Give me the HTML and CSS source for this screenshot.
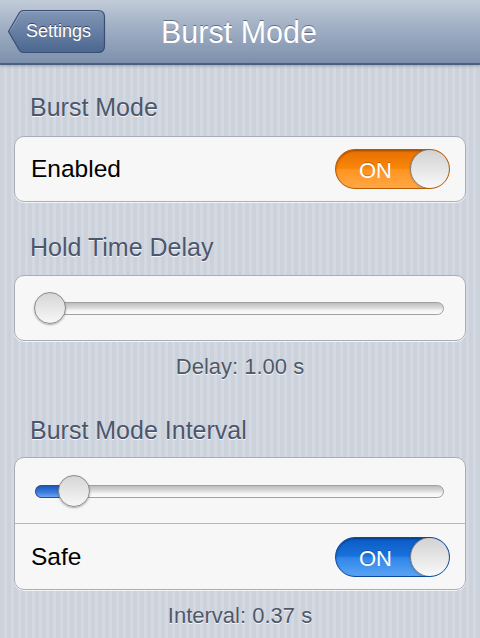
FILE: index.html
```html
<!DOCTYPE html>
<html>
<head>
<meta charset="utf-8">
<link rel="stylesheet" href="styles.css">
</head>
<body>
<div class="navbar">
  <div class="back">
    <svg class="back-shape" width="99" height="45" viewBox="0 0 99 45">
      <defs>
        <linearGradient id="bg" x1="0" y1="0" x2="0" y2="1">
          <stop offset="0" stop-color="#8297b6"/>
          <stop offset="1" stop-color="#4b6690"/>
        </linearGradient>
      </defs>
      <path d="M1.5 22.5 L12.5 3.5 Q14 1.5 16.5 1.5 L91 1.5 Q97.5 1.5 97.5 8 L97.5 37 Q97.5 43.5 91 43.5 L16.5 43.5 Q14 43.5 12.5 41.5 Z" fill="url(#bg)" stroke="#3a4e70" stroke-width="1.2"/>
      <path d="M3 22 L13.5 4 Q15 2.6 17 2.6 L91 2.6" fill="none" stroke="rgba(255,255,255,0.18)" stroke-width="1"/>
    </svg>
    <span class="back-text">Settings</span>
  </div>
  <div class="title">Burst Mode</div>
</div>
<div class="content">
  <div class="group-header first">Burst Mode</div>
  <div class="card">
    <div class="row">
      <span class="label">Enabled</span>
      <div class="switch orange"><span class="on">ON</span><span class="knob"></span></div>
    </div>
  </div>

  <div class="group-header">Hold Time Delay</div>
  <div class="card">
    <div class="row slider-row">
      <div class="slider">
        <div class="track"></div>
        <div class="thumb" style="left:0px"></div>
      </div>
    </div>
  </div>
  <div class="footer">Delay: 1.00 s</div>

  <div class="group-header after-footer">Burst Mode Interval</div>
  <div class="card tall">
    <div class="row slider-row">
      <div class="slider">
        <div class="track"></div>
        <div class="fill" style="width:32px"></div>
        <div class="thumb" style="left:24px"></div>
      </div>
    </div>
    <div class="row divided">
      <span class="label">Safe</span>
      <div class="switch blue"><span class="on">ON</span><span class="knob"></span></div>
    </div>
  </div>
  <div class="footer">Interval: 0.37 s</div>
</div>
</body>
</html>
```

FILE: styles.css
```css
html, body {
  margin: 0;
  padding: 0;
}
body {
  width: 480px;
  height: 638px;
  overflow: hidden;
  font-family: "Liberation Sans", Arial, Helvetica, sans-serif;
  background-color: #cfd5de;
  background-image: repeating-linear-gradient(90deg, #ccd2dc 0px, #ccd2dc 4px, #d3d8e1 4px, #d3d8e1 7px);
}
.navbar {
  height: 63px;
  border-bottom: 2px solid #4b5f80;
  background: linear-gradient(#c2ccd9 0%, #a3b1c5 40%, #7c90ad 100%);
  position: relative;
  box-shadow: 0 1px 3px rgba(0,0,0,0.25);
  box-sizing: content-box;
}
.title {
  position: absolute;
  left: 0;
  right: 0;
  top: 15px;
  text-align: center;
  font-size: 30.5px;
  line-height: 34px;
  color: #fff;
  text-shadow: 0 -1px 0 rgba(40,55,80,0.55);
  padding-right: 2px;
}
.back {
  position: absolute;
  left: 7px;
  top: 9px;
  width: 99px;
  height: 45px;
  display: flex;
  align-items: center;
}
.back-shape {
  position: absolute;
  left: 0;
  top: 0;
}
.back-text {
  position: relative;
  margin-left: 19px;
  color: #fff;
  font-size: 18px;
  text-shadow: 0 -1px 0 rgba(20,35,60,0.65);
}
.content {
  padding: 0 14px;
}
.group-header {
  font-size: 25px;
  line-height: 30px;
  color: #4c566c;
  text-shadow: 0 1px 0 rgba(255,255,255,0.8);
  padding-left: 16px;
  margin: 30px 0 13px;
}
.group-header.first {
  margin-top: 27px;
  margin-bottom: 14px;
}
.group-header.after-footer {
  margin-top: 35px;
  margin-bottom: 12px;
}
.card {
  background: #f7f7f7;
  border: 1px solid #a8aeb7;
  border-radius: 10px;
  box-shadow: 0 1px 0 rgba(255,255,255,0.75);
}
.row {
  height: 64px;
  display: flex;
  align-items: center;
  padding: 0 15px 0 16px;
}
.card.tall .row {
  height: 65px;
}
.row.divided {
  border-top: 1px solid #b5bac2;
}
.label {
  font-size: 24.5px;
  color: #000;
  flex: 1;
}
.switch {
  width: 115px;
  height: 40px;
  border-radius: 20px;
  position: relative;
  overflow: hidden;
  box-sizing: border-box;
  border: 1px solid #777;
  box-shadow: inset 0 1px 2px rgba(0,0,0,0.35);
}
.switch.orange {
  background: linear-gradient(#e86f00 0%, #f9860a 48%, #ff9421 52%, #ffa845 100%);
  border-color: #b85a00;
}
.switch.blue {
  background: linear-gradient(#0a5ac4 0%, #1a72dc 48%, #2f86ea 52%, #5aa3f3 100%);
  border-color: #0b4a9e;
}
.switch .on {
  position: absolute;
  left: 23px;
  top: 0;
  line-height: 40px;
  padding-top: 1px;
  color: #fff;
  font-size: 22px;
  text-shadow: 0 -1px 0 rgba(0,0,0,0.25);
}
.switch .knob {
  position: absolute;
  right: -1px;
  top: -1px;
  width: 40px;
  height: 40px;
  border-radius: 50%;
  background: linear-gradient(#d2d2d2, #f9f9f9);
  border: 1px solid #808080;
  box-sizing: border-box;
  box-shadow: 0 0 2px rgba(0,0,0,0.3);
}
.row.slider-row {
  padding: 0 21px 0 19px;
}
.slider {
  position: relative;
  flex: 1;
  height: 32px;
}
.track {
  position: absolute;
  left: 1px;
  right: 0;
  top: 10px;
  height: 13px;
  border-radius: 7px;
  background: linear-gradient(#bdbdbd, #dcdcdc 45%, #f4f4f4 70%, #fbfbfb);
  border: 1px solid #a0a0a0;
  box-sizing: border-box;
}
.fill {
  position: absolute;
  left: 1px;
  top: 10px;
  height: 13px;
  border-radius: 7px 0 0 7px;
  background: linear-gradient(#1e56b9, #3a7ade 55%, #6ea4f0);
  border: 1px solid #2a4f8f;
  border-right: none;
  box-sizing: border-box;
}
.thumb {
  position: absolute;
  top: 0;
  width: 32px;
  height: 32px;
  border-radius: 50%;
  background: linear-gradient(#d6d6d6, #f7f7f7);
  border: 1px solid #8a8a8a;
  box-sizing: border-box;
  box-shadow: 0 1px 2px rgba(0,0,0,0.3);
}
.footer {
  text-align: center;
  font-size: 22px;
  line-height: 26px;
  color: #4f5868;
  text-shadow: 0 1px 0 rgba(255,255,255,0.85);
  padding-top: 13px;
}
```
